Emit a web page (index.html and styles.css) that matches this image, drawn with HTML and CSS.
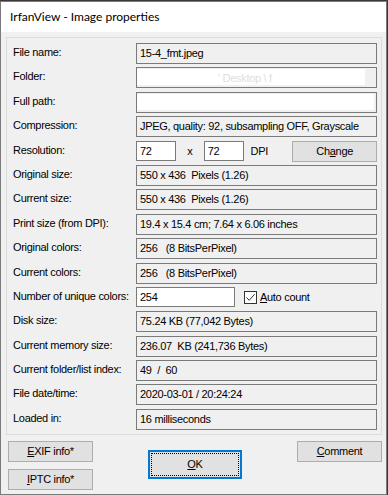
FILE: index.html
```html
<!DOCTYPE html>
<html lang="en">
<head>
    <meta charset="UTF-8">
    <title>IrfanView - Image properties</title>
    <link rel="stylesheet" href="styles.css">
</head>
<body>
    <div class="window">
        <div class="titlebar">IrfanView - Image properties</div>
        <div class="content">
            <div class="group">
                <span class="lbl">File name:</span>
                <span class="fld">15-4_fmt.jpeg</span>

                <span class="lbl">Folder:</span>
                <span class="fld"><span class="redact r1"><span class="ghost">' Desktop \ f</span></span></span>

                <span class="lbl">Full path:</span>
                <span class="fld"><span class="redact r2"></span></span>

                <span class="lbl">Compression:</span>
                <span class="fld">JPEG, quality: 92, subsampling OFF, Grayscale</span>

                <span class="lbl">Resolution:</span>
                <div class="resrow">
                    <span class="edit dpi">72</span>
                    <span class="times">x</span>
                    <span class="edit dpi">72</span>
                    <span class="unit">DPI</span>
                    <button class="btn change">Ch<u>a</u>nge</button>
                </div>

                <span class="lbl">Original size:</span>
                <span class="fld">550 x 436&nbsp; Pixels (1.26)</span>

                <span class="lbl">Current size:</span>
                <span class="fld">550 x 436&nbsp; Pixels (1.26)</span>

                <span class="lbl">Print size (from DPI):</span>
                <span class="fld">19.4 x 15.4 cm; 7.64 x 6.06 inches</span>

                <span class="lbl">Original colors:</span>
                <span class="fld">256&nbsp;&nbsp; (8 BitsPerPixel)</span>

                <span class="lbl">Current colors:</span>
                <span class="fld">256&nbsp;&nbsp; (8 BitsPerPixel)</span>

                <span class="lbl">Number of unique colors:</span>
                <div class="uniqrow">
                    <span class="edit uniq">254</span>
                    <span class="check">
                        <svg width="11" height="11" viewBox="0 0 11 11"><path d="M1.5 5.5 L4.2 8.3 L9.6 2.2" fill="none" stroke="#333" stroke-width="1"/></svg>
                    </span>
                    <span class="checklbl"><u>A</u>uto count</span>
                </div>

                <span class="lbl">Disk size:</span>
                <span class="fld">75.24 KB (77,042 Bytes)</span>

                <span class="lbl">Current memory size:</span>
                <span class="fld">236.07&nbsp; KB (241,736 Bytes)</span>

                <span class="lbl">Current folder/list index:</span>
                <span class="fld">49&nbsp; /&nbsp; 60</span>

                <span class="lbl">File date/time:</span>
                <span class="fld">2020-03-01 / 20:24:24</span>

                <span class="lbl">Loaded in:</span>
                <span class="fld">16 milliseconds</span>
            </div>

            <div class="buttons">
                <div class="leftbtns">
                    <button class="btn"><u>E</u>XIF info*</button>
                    <button class="btn"><u>I</u>PTC info*</button>
                </div>
                <button class="btn ok"><span class="focus"><u>O</u>K</span></button>
                <button class="btn comment"><u>C</u>omment</button>
            </div>
        </div>
    </div>
</body>
</html>
```

FILE: styles.css
```css
html, body {
    margin: 0;
    padding: 0;
}
body {
    background: #3a3836;
    width: 388px;
    height: 495px;
    overflow: hidden;
}
.window {
    width: 385px;
    height: 492px;
    margin-top: 1px;
    border: 1px solid #7a7a7a;
    background: #f0f0f0;
    display: flex;
    flex-direction: column;
    font-family: "Liberation Sans", Arial, sans-serif;
    font-size: 11px;
    letter-spacing: -0.3px;
    color: #000;
}
.titlebar {
    height: 30px;
    background: #fff;
    font-family: Lato, "Noto Sans", sans-serif;
    font-size: 12px;
    letter-spacing: 0;
    line-height: 30px;
    padding-left: 9px;
    color: #000;
}
.content {
    padding: 5px 4px 0 5px;
}

/* group with the property rows */
.group {
    border: 1px solid #dcdcdc;
    padding: 5px 5px 4px 6px;
    display: grid;
    grid-template-columns: 123px 241px;
    grid-auto-rows: 21px;
    row-gap: 3.4px;
    align-items: center;
}
.lbl {
    white-space: nowrap;
    line-height: 21px;
    margin-top: -2px;
}
.fld {
    box-sizing: border-box;
    height: 21px;
    border: 1px solid #7a7a7a;
    padding-left: 3px;
    line-height: 19px;
    white-space: nowrap;
    overflow: hidden;
    position: relative;
}
.redact {
    position: absolute;
    top: 1px;
    left: 0;
    height: 16px;
    background: #fff;
}
.redact.r1 { width: 228px; }
.redact.r2 { width: 237px; }
.ghost {
    color: #dedede;
    padding-left: 81px;
    line-height: 16px;
}

.edit {
    box-sizing: border-box;
    height: 20px;
    border: 1px solid #7a7a7a;
    background: #fff;
    padding-left: 3px;
    line-height: 18px;
}
.resrow, .uniqrow {
    display: flex;
    align-items: center;
    height: 21px;
}
.dpi { width: 40px; }
.times {
    width: 28px;
    text-align: center;
}
.unit {
    margin-left: 7px;
    width: 42px;
}
.uniq { width: 99px; }
.check {
    box-sizing: border-box;
    width: 13px;
    height: 13px;
    border: 1px solid #333;
    background: #fff;
    margin-left: 9px;
    display: flex;
}
.checklbl {
    margin-left: 3px;
}

.btn {
    box-sizing: border-box;
    width: 85px;
    height: 21px;
    background: #e1e1e1;
    border: 1px solid #adadad;
    font-family: "Liberation Sans", Arial, sans-serif;
    font-size: 11px;
    letter-spacing: -0.3px;
    color: #000;
    padding: 0;
    margin: 0;
}

.buttons {
    display: grid;
    grid-template-columns: 85px 1fr 85px;
    padding: 6px 0 0 2px;
}
.leftbtns {
    display: flex;
    flex-direction: column;
    gap: 7px;
}
.ok {
    justify-self: center;
    width: 94px;
    height: 29px;
    margin-top: 9px;
    border: 2px solid #0078d7;
    padding: 1px;
}
.focus {
    display: flex;
    align-items: center;
    justify-content: center;
    height: 100%;
    border: 1px dotted #000;
    box-sizing: border-box;
}
```
